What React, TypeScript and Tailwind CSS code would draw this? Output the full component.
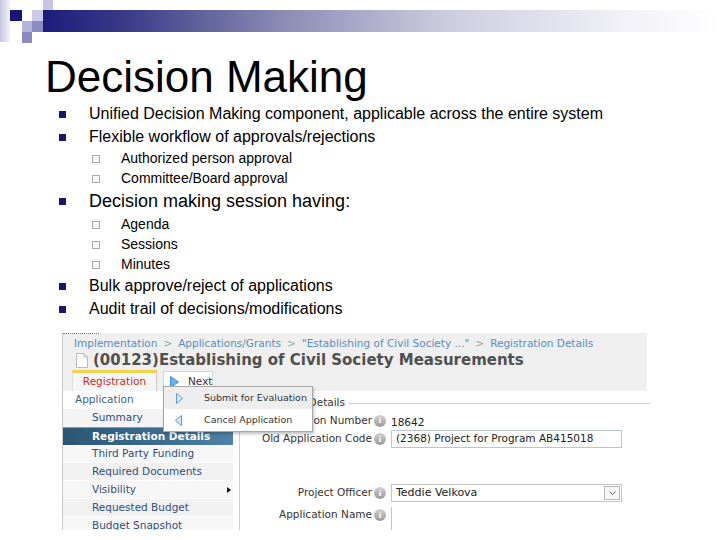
import React from 'react';

const sans = "font-['Liberation_Sans',Arial,sans-serif]";
const ui = "font-['DejaVu_Sans',Verdana,sans-serif]";

function HeaderArt() {
  return (
    <svg width="720" height="46" viewBox="0 0 720 46" className="block">
      <defs>
        <linearGradient id="bar" x1="0" x2="1" y1="0" y2="0">
          <stop offset="0" stopColor="#1c1c7e" />
          <stop offset="0.12" stopColor="#3a3a88" />
          <stop offset="0.35" stopColor="#8a8ab4" />
          <stop offset="0.6" stopColor="#cdcde0" />
          <stop offset="0.85" stopColor="#f0f0f6" />
          <stop offset="1" stopColor="#ffffff" />
        </linearGradient>
        <linearGradient id="fade" x1="0" x2="1" y1="0" y2="0">
          <stop offset="0" stopColor="#c4c4e2" />
          <stop offset="1" stopColor="#ffffff" />
        </linearGradient>
      </defs>
      <rect x="0" y="0" width="12" height="42" fill="url(#fade)" />
      <rect x="43" y="10" width="677" height="22" fill="url(#bar)" />
      <rect x="10" y="10" width="12" height="11" fill="#16167a" />
      <rect x="32" y="10" width="11" height="11" fill="#cacae6" />
      <rect x="43" y="0" width="10" height="10" fill="#c6c6e2" />
      <rect x="22" y="21" width="10" height="11" fill="#b4b4d8" />
      <rect x="32" y="21" width="11" height="11" fill="#8c8cc4" />
      <rect x="22" y="32" width="10" height="11" fill="#8a8ac0" />
    </svg>
  );
}

function L1({ children, h }: { children: React.ReactNode; h: string }) {
  return (
    <div className={`flex items-center pl-[59px] ${h}`}>
      <span className="w-[7px] h-[7px] bg-[#17176e] shrink-0 mt-[1px]" />
      <span className="ml-[23px] whitespace-nowrap">{children}</span>
    </div>
  );
}

function L2({ children }: { children: React.ReactNode }) {
  return (
    <div className="flex items-center pl-[92px] h-[20px]">
      <span className="w-[8px] h-[8px] border border-[#a8a8a8] shrink-0 mt-[1px]" />
      <span className="ml-[21px] text-[14px] whitespace-nowrap">{children}</span>
    </div>
  );
}

function Info() {
  return (
    <span className="flex items-center justify-center w-[12px] h-[12px] rounded-full bg-gradient-to-b from-[#d2d2d2] to-[#9a9a9a] text-white text-[9px] font-bold leading-none font-['Liberation_Serif',serif] shrink-0">
      i
    </span>
  );
}

function Field({ label, h, children }: { label: string; h: string; children?: React.ReactNode }) {
  return (
    <div className={`flex items-center ${h}`}>
      <div className="w-[132px] shrink-0 flex justify-end whitespace-nowrap text-[10.5px] text-[#333]">{label}</div>
      <div className="ml-[2px] shrink-0"><Info /></div>
      <div className="ml-[5px] flex-1">{children}</div>
    </div>
  );
}

const navItems = [
  'Third Party Funding',
  'Required Documents',
  'Visibility',
  'Requested Budget',
  'Budget Snapshot',
];

function Screenshot() {
  return (
    <div className={`relative ml-[62px] w-[590px] h-[197px] overflow-hidden bg-white ${ui}`}>
      <div className="h-[58px] bg-[#efefef] border-l border-[#c8c8c8] mr-[5px]">
        <div className="w-[36px] border-t border-dotted border-[#d06060]" />
        <div className="pl-[11px] pt-[3px] h-[17px] flex items-center text-[10.5px] text-[#5b8dba] whitespace-nowrap">
          Implementation <span className="mx-[6px] text-[#8aa]">&gt;</span> Applications/Grants
          <span className="mx-[6px] text-[#8aa]">&gt;</span> "Establishing of Civil Society ..."
          <span className="mx-[6px] text-[#8aa]">&gt;</span> Registration Details
        </div>
        <div className="flex items-center h-[19px] pl-[13px]">
          <svg width="12" height="15" viewBox="0 0 12 15" className="shrink-0">
            <path d="M0.5 0.5 H8 L11.5 4 V14.5 H0.5 Z" fill="#fff" stroke="#bbb" />
            <path d="M8 0.5 V4 H11.5" fill="none" stroke="#bbb" />
          </svg>
          <span className="ml-[5px] text-[15px] font-bold text-[#505050] whitespace-nowrap">
            (00123)Establishing of Civil Society Measurements
          </span>
        </div>
        <div className="flex items-end h-[21px] pl-[9px]">
          <div className="w-[85px] h-[21px] border-t-[3px] border-[#f3d24a] border-r border-r-[#c8c8c8] border-l border-l-[#dcdcdc] bg-[#f6f6f6] text-[10.5px] text-[#cc2a2a] flex items-center justify-center">
            Registration
          </div>
          <div className="ml-[6px] w-[50px] h-[20px] bg-white border-t border-l border-r border-[#d4d4d4] flex items-center pl-[6px]">
            <svg width="9" height="12" viewBox="0 0 9 12" className="shrink-0">
              <path d="M0.5 0.5 L8.5 6 L0.5 11.5 Z" fill="#6fb0e4" stroke="#3f8fd0" />
            </svg>
            <span className="ml-[9px] text-[10.5px] text-[#333]">Next</span>
          </div>
        </div>
      </div>

      <div className="flex">
        <div className="w-[171px] text-[10.5px] text-[#2f4f7e] border-l border-[#c8c8c8]">
          <div className="h-[18px] flex items-center pl-[12px] text-[#3f5f8e]">Application</div>
          <div className="h-[18px] flex items-center pl-[29px] bg-[#f4f4f4]">Summary</div>
          <div className="h-[18px] flex items-center pl-[29px] font-bold text-white bg-gradient-to-r from-[#2b5676] via-[#3a6a8c] to-[#4f84a6] border-t border-[#7aa0bc]">
            Registration Details
          </div>
          {navItems.map((n, i) => (
            <div
              key={n}
              className={`h-[18px] flex items-center pl-[29px] border-b border-white ${i % 2 === 0 ? 'bg-[#f7f7f7]' : 'bg-[#f1f1f1]'}`}
            >
              <span className="flex-1">{n}</span>
              {n === 'Visibility' && (
                <svg width="4" height="6" viewBox="0 0 4 6" className="mr-[2px] shrink-0">
                  <path d="M0 0 L4 3 L0 6 Z" fill="#111" />
                </svg>
              )}
            </div>
          ))}
        </div>

        <div className="ml-[6px] flex-1 border-l border-[#d0d0d0] mt-[4px]">
          <div className="flex items-center h-[16px]">
            <div className="w-[105px] flex justify-end whitespace-nowrap text-[10.5px] text-[#333]">
              Registration Details
            </div>
            <div className="flex-1 ml-[3px] mr-[2px] border-t border-[#cfcfcf]" />
          </div>
          <Field label="Application Number" h="h-[19px]">
            <span className="text-[10.5px] text-[#222]">18642</span>
          </Field>
          <Field label="Old Application Code" h="h-[18px]">
            <div className="w-[231px] h-[18px] border border-[#b9c6d2] flex items-center px-[4px] text-[10.5px] text-[#222] whitespace-nowrap">
              (2368) Project for Program AB415018
            </div>
          </Field>
          <div className="mt-[36px]">
            <Field label="Project Officer" h="h-[18px]">
              <div className="w-[231px] h-[18px] border border-[#c4c4c4] flex items-center pl-[4px] pr-[1px] text-[11px] text-[#222]">
                <span className="flex-1">Teddie Velkova</span>
                <span className="w-[16px] h-[14px] border border-[#b8b8b8] bg-[#f6f6f6] flex items-center justify-center shrink-0">
                  <svg width="7" height="4" viewBox="0 0 7 4">
                    <path d="M0.5 0.5 L3.5 3.5 L6.5 0.5" fill="none" stroke="#666" />
                  </svg>
                </span>
              </div>
            </Field>
          </div>
          <div className="mt-[4px]">
            <Field label="Application Name" h="h-[18px]">
              <div className="w-[231px] h-[30px] mt-[14px] border-l border-[#c4c4c4]" />
            </Field>
          </div>
        </div>
      </div>

      <div className="absolute left-[101px] top-[53px] w-[150px] h-[46px] bg-white border border-[#a9a9a9] shadow-[1px_2px_3px_rgba(0,0,0,0.25)] z-10 text-[9.5px] text-[#333]">
        <div className="h-[22px] flex items-center bg-[#eeeeee] pl-[12px]">
          <svg width="7" height="11" viewBox="0 0 7 11" className="shrink-0">
            <path d="M0.5 0.5 L6.5 5.5 L0.5 10.5 Z" fill="#dbeaf8" stroke="#5b9bd5" />
          </svg>
          <span className="ml-[21px] whitespace-nowrap">Submit for Evaluation</span>
        </div>
        <div className="h-[22px] flex items-center pl-[11px]">
          <svg width="7" height="11" viewBox="0 0 7 11" className="shrink-0">
            <path d="M6.5 0.5 L0.5 5.5 L6.5 10.5 Z" fill="#dbeaf8" stroke="#5b9bd5" />
          </svg>
          <span className="ml-[22px] whitespace-nowrap">Cancel Application</span>
        </div>
      </div>
    </div>
  );
}

export default function App() {
  return (
    <div className={`w-[720px] h-[540px] bg-white overflow-hidden text-black ${sans}`}>
      <HeaderArt />
      <h1 className="ml-[45px] mt-[9px] text-[44px] leading-[44px] font-normal whitespace-nowrap">
        Decision Making
      </h1>
      <div className="mt-[3px] text-[16px]">
        <L1 h="h-[23px]">Unified Decision Making component, applicable across the entire system</L1>
        <L1 h="h-[23px]">Flexible workflow of approvals/rejections</L1>
        <L2>Authorized person approval</L2>
        <L2>Committee/Board approval</L2>
        <L1 h="h-[26px] text-[18px]">Decision making session having:</L1>
        <L2>Agenda</L2>
        <L2>Sessions</L2>
        <L2>Minutes</L2>
        <L1 h="h-[24px]">Bulk approve/reject of applications</L1>
        <L1 h="h-[22px]">Audit trail of decisions/modifications</L1>
      </div>
      <div className="mt-[13px]">
        <Screenshot />
      </div>
    </div>
  );
}
